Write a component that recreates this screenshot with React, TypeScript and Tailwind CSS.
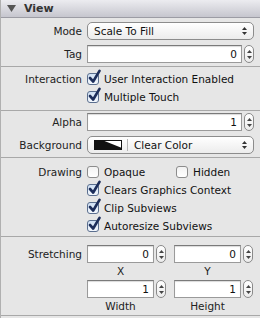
import React from "react";

const Stepper = () => (
  <div className="w-[10px] h-[18px] rounded-full border border-[#8a8a8a] bg-gradient-to-b from-white to-[#ececec] flex flex-col items-center justify-center gap-[3px] shrink-0">
    <svg width="5" height="3" viewBox="0 0 5 3"><polygon points="2.5,0 5,3 0,3" fill="#444" /></svg>
    <svg width="5" height="3" viewBox="0 0 5 3"><polygon points="0,0 5,0 2.5,3" fill="#444" /></svg>
  </div>
);

const PopArrows = () => (
  <div className="flex flex-col items-center gap-[2px] mr-[6px]">
    <svg width="5" height="3" viewBox="0 0 5 3"><polygon points="2.5,0 5,3 0,3" fill="#333" /></svg>
    <svg width="5" height="3" viewBox="0 0 5 3"><polygon points="0,0 5,0 2.5,3" fill="#333" /></svg>
  </div>
);

const Field = ({ value, w }: { value: string; w: string }) => (
  <div className={`${w} h-[18px] bg-white border border-[#9a9a9a] border-t-[#7a7a7a] shadow-[inset_0_1px_1px_rgba(0,0,0,0.15)] flex items-center justify-end pr-[4px] text-[#111]`}>
    {value}
  </div>
);

const Check = ({ checked }: { checked: boolean }) => (
  <div className="relative w-[12px] h-[12px] shrink-0">
    <div
      className={`absolute inset-0 rounded-[3px] border ${
        checked
          ? "border-[#5b6f8f] bg-gradient-to-b from-[#cfe0f4] to-[#f4f8fd]"
          : "border-[#8c8c8c] bg-gradient-to-b from-[#f2f2f2] to-white"
      }`}
    />
    {checked && (
      <svg className="absolute left-[1px] top-[-4px]" width="13" height="15" viewBox="0 0 13 15">
        <path d="M2 9 L5.2 12.5 L11.5 1.8" fill="none" stroke="#1c2d5a" strokeWidth="2.6" strokeLinecap="round" strokeLinejoin="round" />
      </svg>
    )}
  </div>
);

const Label = ({ children }: { children?: React.ReactNode }) => (
  <div className="w-[81px] text-right shrink-0 text-[#222]">{children}</div>
);

const CheckRow = ({ label, text, checked }: { label?: string; text: string; checked: boolean }) => (
  <div className="flex items-center h-[18px]">
    <Label>{label}</Label>
    <div className="ml-[5px] flex items-center">
      <Check checked={checked} />
      <span className="ml-[5px] text-[#111]">{text}</span>
    </div>
  </div>
);

const StretchCell = ({ value, label, fixed }: { value: string; label: string; fixed?: boolean }) => (
  <div className="flex flex-col items-start">
    <div className="flex items-center gap-[2px]">
      <Field value={value} w="w-[67px]" />
      <Stepper />
    </div>
    <div className={`w-[67px] text-center mt-[3px] text-[#222] ${fixed ? "h-[12px]" : ""}`}>{label}</div>
  </div>
);

export default function App() {
  return (
    <div
      className="w-[260px] h-[318px] bg-[#e6e6e6] border-l border-[#b0b0b0] text-[10.5px] leading-none overflow-hidden"
      style={{ fontFamily: '"DejaVu Sans", sans-serif' }}
    >
      {/* header */}
      <div className="h-[18px] bg-gradient-to-b from-[#ececf0] to-[#c6c6ce] border-b border-[#9c9ca4] flex items-center">
        <svg className="ml-[6px]" width="9" height="7" viewBox="0 0 9 7"><polygon points="0,0 9,0 4.5,7" fill="#555" /></svg>
        <span className="ml-[8px] font-bold text-[#333] text-[11px]">View</span>
      </div>

      {/* section 1 */}
      <div className="pt-[4px] pb-[3px] flex flex-col gap-[5px] border-b border-[#a8a8a8]">
        <div className="flex items-center h-[18px]">
          <Label>Mode</Label>
          <div className="ml-[5px] w-[167px] h-[18px] rounded-[5px] border border-[#8c8c8c] bg-gradient-to-b from-white to-[#ececec] flex items-center justify-between pl-[6px] text-[#111]">
            <span>Scale To Fill</span>
            <PopArrows />
          </div>
        </div>
        <div className="flex items-center h-[18px]">
          <Label>Tag</Label>
          <div className="ml-[5px] flex items-center gap-[2px]">
            <Field value="0" w="w-[155px]" />
            <Stepper />
          </div>
        </div>
      </div>

      {/* section 2 */}
      <div className="pt-[3px] pb-[4px] flex flex-col border-b border-[#a8a8a8]">
        <CheckRow label="Interaction" text="User Interaction Enabled" checked />
        <CheckRow text="Multiple Touch" checked />
      </div>

      {/* section 3 */}
      <div className="pt-[2px] pb-[3px] flex flex-col gap-[5px] border-b border-[#a8a8a8]">
        <div className="flex items-center h-[18px]">
          <Label>Alpha</Label>
          <div className="ml-[5px] flex items-center gap-[2px]">
            <Field value="1" w="w-[155px]" />
            <Stepper />
          </div>
        </div>
        <div className="flex items-center h-[18px]">
          <Label>Background</Label>
          <div className="ml-[5px] w-[167px] h-[18px] rounded-[5px] border border-[#8c8c8c] bg-gradient-to-b from-white to-[#ececec] flex items-center justify-between pl-[6px] text-[#111]">
            <div className="flex items-center">
              <svg width="28" height="10" viewBox="0 0 28 10">
                <rect x="0.5" y="0.5" width="27" height="9" fill="white" stroke="#111" />
                <polygon points="0,0 8,0 28,8 28,10 0,10" fill="#111" />
              </svg>
              <div className="w-px h-[12px] bg-[#b5b5b5] ml-[5px]" />
              <span className="ml-[6px]">Clear Color</span>
            </div>
            <PopArrows />
          </div>
        </div>
      </div>

      {/* section 4 */}
      <div className="pt-[5px] pb-[1px] flex flex-col border-b border-[#a8a8a8]">
        <div className="flex items-center h-[18px]">
          <Label>Drawing</Label>
          <div className="ml-[5px] flex items-center">
            <Check checked={false} />
            <span className="ml-[5px] text-[#111] w-[72px]">Opaque</span>
            <Check checked={false} />
            <span className="ml-[5px] text-[#111]">Hidden</span>
          </div>
        </div>
        <CheckRow text="Clears Graphics Context" checked />
        <CheckRow text="Clip Subviews" checked />
        <CheckRow text="Autoresize Subviews" checked />
      </div>

      {/* section 5 */}
      <div className="pt-[8px] h-[79px] border-b border-[#a8a8a8] flex flex-col">
        <div className="flex">
          <Label><div className="h-[18px] flex items-center justify-end">Stretching</div></Label>
          <div className="ml-[5px] flex flex-col gap-[2px]">
            <div className="flex gap-[8px]">
              <StretchCell value="0" label="X" fixed />
              <StretchCell value="0" label="Y" fixed />
            </div>
            <div className="flex gap-[8px]">
              <StretchCell value="1" label="Width" />
              <StretchCell value="1" label="Height" />
            </div>
          </div>
        </div>
      </div>
    </div>
  );
}
